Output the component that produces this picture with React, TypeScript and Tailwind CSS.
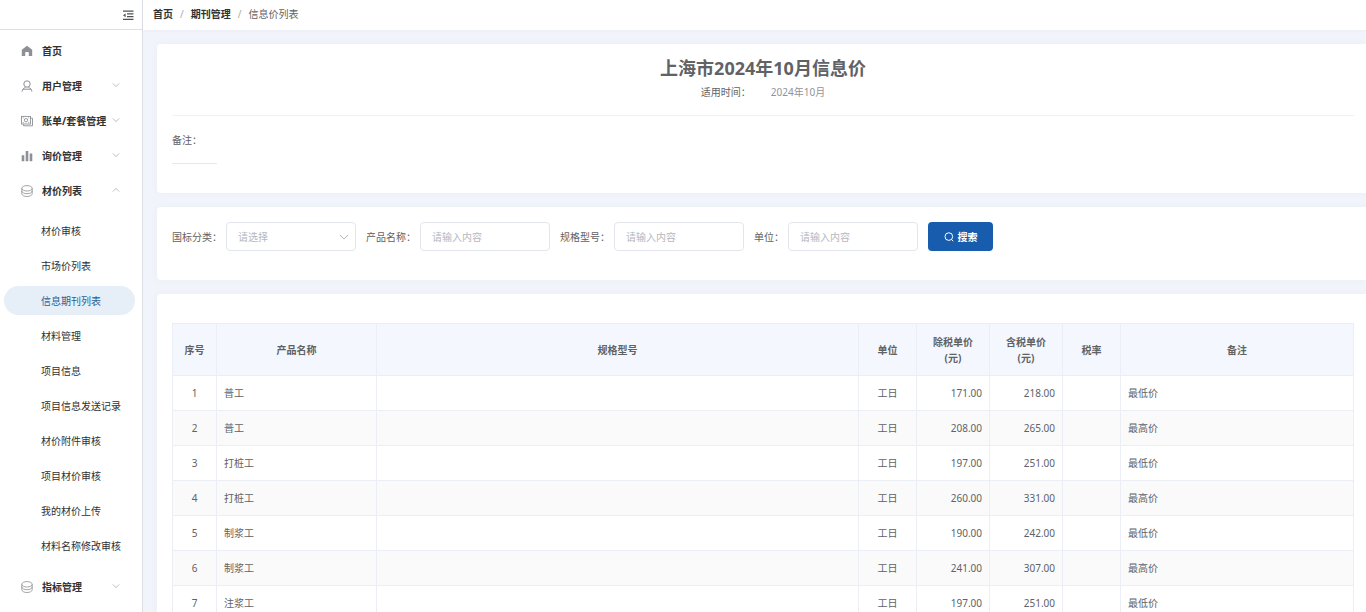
import React from 'react';
import { clsx } from 'clsx';

type IconProps = { className?: string };

const HomeIcon = ({ className }: IconProps) => (
  <svg viewBox="0 0 12 12" className={className} fill="currentColor">
    <path d="M6 .8 11.2 4.7V11H7.8V7.6a.6.6 0 0 0-.6-.6H4.8a.6.6 0 0 0-.6.6V11H.8V4.7z" />
  </svg>
);

const UserIcon = ({ className }: IconProps) => (
  <svg viewBox="0 0 12 12" className={className} fill="none" stroke="currentColor" strokeWidth="1">
    <circle cx="6" cy="4" r="3.2" />
    <path d="M1.1 11.6c.2-2.200 1.500-3.600 3.400-4.200M10.900 11.600c-.2-2.200-1.500-3.600-3.400-4.200M2 9.200h8" />
  </svg>
);

const BillIcon = ({ className }: IconProps) => (
  <svg viewBox="0 0 12 12" className={className} fill="none" stroke="currentColor" strokeWidth="0.9">
    <rect x=".5" y="1.4" width="9" height="7.6" />
    <path d="M9.8 3.2h1.700v7.600H2.600V9" />
    <circle cx="5" cy="5.200" r="1.700" />
    <path d="M1.800 2.900h.9M7.300 7.500h.9M7.300 2.900h.9M1.800 7.500h.9" />
  </svg>
);

const BarsIcon = ({ className }: IconProps) => (
  <svg viewBox="0 0 12 12" className={className} fill="currentColor">
    <path d="M.7 5.2h2.6v6.1H.7zM4.7 1h2.6v10.3H4.7zM8.7 3.6h2.6v7.7H8.7z" />
  </svg>
);

const CoinIcon = ({ className }: IconProps) => (
  <svg viewBox="0 0 12 12" className={className} fill="none" stroke="currentColor" strokeWidth="0.8">
    <ellipse cx="6" cy="3.3" rx="5.2" ry="2.700" />
    <path d="M.8 3.3v5.500c0 1.500 2.300 2.700 5.200 2.700s5.200-1.200 5.200-2.700V3.300" />
    <path d="M.8 6c0 1.500 2.300 2.700 5.200 2.700S11.200 7.500 11.200 6" />
  </svg>
);

const FoldIcon = ({ className }: IconProps) => (
  <svg viewBox="0 0 12 12" className={className} fill="currentColor">
    <path d="M1 1.500h10.500v1.300H1zM5 4.300h6.500v1.300H5zM5 7h6.500v1.300H5zM1 9.700h10.500V11H1zM1 6.300l2.600-1.900v3.800z" />
  </svg>
);

const Chevron = ({ className }: IconProps) => (
  <svg viewBox="0 0 10 10" className={className} fill="none" stroke="currentColor" strokeWidth="1">
    <path d="M1 3 5 7l4-4" />
  </svg>
);

const SearchIcon = ({ className }: IconProps) => (
  <svg viewBox="0 0 12 12" className={className} fill="none" stroke="currentColor" strokeWidth="1.2">
    <circle cx="5.8" cy="5.5" r="4.6" />
    <path d="m8.9 8.900 2.200 2.200" />
  </svg>
);

const subMenu = [
  '材价审核',
  '市场价列表',
  '信息期刊列表',
  '材料管理',
  '项目信息',
  '项目信息发送记录',
  '材价附件审核',
  '项目材价审核',
  '我的材价上传',
  '材料名称修改审核',
];

const menu = [
  { label: '首页', icon: HomeIcon },
  { label: '用户管理', icon: UserIcon, expandable: true },
  { label: '账单/套餐管理', icon: BillIcon, expandable: true },
  { label: '询价管理', icon: BarsIcon, expandable: true },
  { label: '材价列表', icon: CoinIcon, expandable: true, children: subMenu },
  { label: '指标管理', icon: CoinIcon, expandable: true },
];

const rows = [
  { name: '普工', net: '171.00', gross: '218.00', note: '最低价' },
  { name: '普工', net: '208.00', gross: '265.00', note: '最高价' },
  { name: '打桩工', net: '197.00', gross: '251.00', note: '最低价' },
  { name: '打桩工', net: '260.00', gross: '331.00', note: '最高价' },
  { name: '制浆工', net: '190.00', gross: '242.00', note: '最低价' },
  { name: '制浆工', net: '241.00', gross: '307.00', note: '最高价' },
  { name: '注浆工', net: '197.00', gross: '251.00', note: '最低价' },
];

const ACTIVE = '信息期刊列表';

function Sidebar() {
  return (
    <aside className="flex w-[143px] shrink-0 flex-col border-r border-[#dcdfe6] bg-white">
      <div className="flex h-[30px] shrink-0 items-center justify-end border-b border-[#dcdfe6] pr-2">
        <button type="button" aria-label="折叠菜单">
          <FoldIcon className="size-3 text-[#505256]" />
        </button>
      </div>
      <nav className="overflow-hidden pt-[3px]">
        {menu.map(({ label, icon: Icon, expandable, children }) => (
          <div key={label}>
            <a href="#" className="flex h-[35px] items-center pr-[22px] pl-[21px] font-bold text-[#303133]">
              <Icon className="mr-[9px] size-3 shrink-0 text-[#8d9095]" />
              <span className="whitespace-nowrap">{label}</span>
              {expandable && (
                <Chevron className={clsx('mb-[2px] ml-auto size-2 shrink-0 text-[#a8abb2]', children && 'rotate-180')} />
              )}
            </a>
            {children && (
              <ul className="pt-[5px] pb-[6px]">
                {children.map((item) => (
                  <li key={item} className="flex h-[35px] items-center pr-[7px] pl-1">
                    <a
                      href="#"
                      className={clsx(
                        'flex h-[29px] w-full items-center rounded-full pl-[37px]',
                        item === ACTIVE ? 'bg-[#e6eff7] text-[#2a6096]' : 'text-[#303133]'
                      )}
                    >
                      {item}
                    </a>
                  </li>
                ))}
              </ul>
            )}
          </div>
        ))}
      </nav>
    </aside>
  );
}

function Card({ className, children }: { className?: string; children: React.ReactNode }) {
  return (
    <section className={clsx('rounded-l bg-white pr-3 pl-[15px] shadow-[0_0_8px_rgba(0,0,0,0.03)]', className)}>
      {children}
    </section>
  );
}

function TextField({ id, label }: { id: string; label: string }) {
  return (
    <div className="flex items-center gap-1">
      <label htmlFor={id}>{label}：</label>
      <input
        id={id}
        placeholder="请输入内容"
        className="h-[29px] w-[130px] rounded-sm border border-[#e2e5eb] px-[11px] outline-none placeholder:text-[#b4b8bf]"
      />
    </div>
  );
}

function PriceTable() {
  const th = 'border-r border-b border-[#ebeef5] font-bold text-[#606266]';
  const td = 'h-[35px] border-r border-b border-[#ebeef5] px-[7px]';
  return (
    <table className="w-full table-fixed border-separate border-spacing-0 border-t border-l border-[#ebeef5]">
      <colgroup>
        <col className="w-[44px]" />
        <col className="w-[160px]" />
        <col />
        <col className="w-[58px]" />
        <col className="w-[73px]" />
        <col className="w-[73px]" />
        <col className="w-[58px]" />
        <col className="w-[233px]" />
      </colgroup>
      <thead>
        <tr className="h-[52px] bg-[#f4f8fe]">
          <th className={th}>序号</th>
          <th className={th}>产品名称</th>
          <th className={th}>规格型号</th>
          <th className={th}>单位</th>
          <th className={th}>除税单价<br />(元)</th>
          <th className={th}>含税单价<br />(元)</th>
          <th className={th}>税率</th>
          <th className={th}>备注</th>
        </tr>
      </thead>
      <tbody>
        {rows.map((row, i) => (
          <tr key={i} className="even:bg-[#fafafa]">
            <td className={clsx(td, 'text-center')}>{i + 1}</td>
            <td className={td}>{row.name}</td>
            <td className={td} />
            <td className={clsx(td, 'text-center')}>工日</td>
            <td className={clsx(td, 'text-right')}>{row.net}</td>
            <td className={clsx(td, 'text-right')}>{row.gross}</td>
            <td className={td} />
            <td className={td}>{row.note}</td>
          </tr>
        ))}
      </tbody>
    </table>
  );
}

export default function App() {
  return (
    <div className="flex h-screen overflow-hidden bg-[#f1f4fa] font-['Noto_Sans','Noto_Sans_CJK_SC',sans-serif] text-[10px] leading-4 text-[#606266]">
      <Sidebar />
      <div className="flex min-w-0 flex-1 flex-col">
        <header className="flex h-[30px] shrink-0 items-center bg-white pb-[2px] pl-[10px] shadow-[0_1px_4px_rgba(0,0,0,0.03)]">
          <nav aria-label="breadcrumb" className="flex items-center gap-[7px]">
            <a href="#" className="font-bold text-[#303133]">首页</a>
            <span className="text-[#a8abb2]">/</span>
            <a href="#" className="font-bold text-[#303133]">期刊管理</a>
            <span className="text-[#a8abb2]">/</span>
            <span>信息价列表</span>
          </nav>
        </header>

        <main className="flex flex-1 flex-col gap-[14px] overflow-y-auto pt-[14px] pl-[14px] [scrollbar-width:none]">
          <Card className="shrink-0 pb-[29px]">
            <div className="border-b border-[#f0f1f4] pt-3 pb-[15px] text-center">
              <h1 className="text-lg leading-6 font-bold text-[#606266]">上海市2024年10月信息价</h1>
              <p className="mt-1">
                适用时间：<span className="ml-5 text-[#909399]">2024年10月</span>
              </p>
            </div>
            <p className="w-[45px] border-b border-[#e6e8ed] pt-4 pb-[15px]">备注：</p>
          </Card>

          <Card className="shrink-0 pt-[15px] pb-[29px]">
            <form className="flex items-center gap-[10px]" onSubmit={(e) => e.preventDefault()}>
              <div className="flex items-center gap-1">
                <label htmlFor="category">国标分类：</label>
                <div className="relative">
                  <select
                    id="category"
                    defaultValue=""
                    className="h-[29px] w-[130px] appearance-none rounded-sm border border-[#e2e5eb] bg-white px-[11px] text-[#b4b8bf] outline-none"
                  >
                    <option value="">请选择</option>
                  </select>
                  <Chevron className="pointer-events-none absolute top-[10px] right-[7px] size-[10px] text-[#b4b8bf]" />
                </div>
              </div>
              <TextField id="product" label="产品名称" />
              <TextField id="spec" label="规格型号" />
              <TextField id="unit" label="单位" />
              <button
                type="submit"
                className="flex h-[29px] w-[65px] items-center justify-center gap-1 rounded-sm bg-[#175cad] font-bold text-white"
              >
                <SearchIcon className="size-[10px]" />
                搜索
              </button>
            </form>
          </Card>

          <Card className="shrink-0 pt-[29px] pb-4">
            <PriceTable />
          </Card>
        </main>
      </div>
    </div>
  );
}
